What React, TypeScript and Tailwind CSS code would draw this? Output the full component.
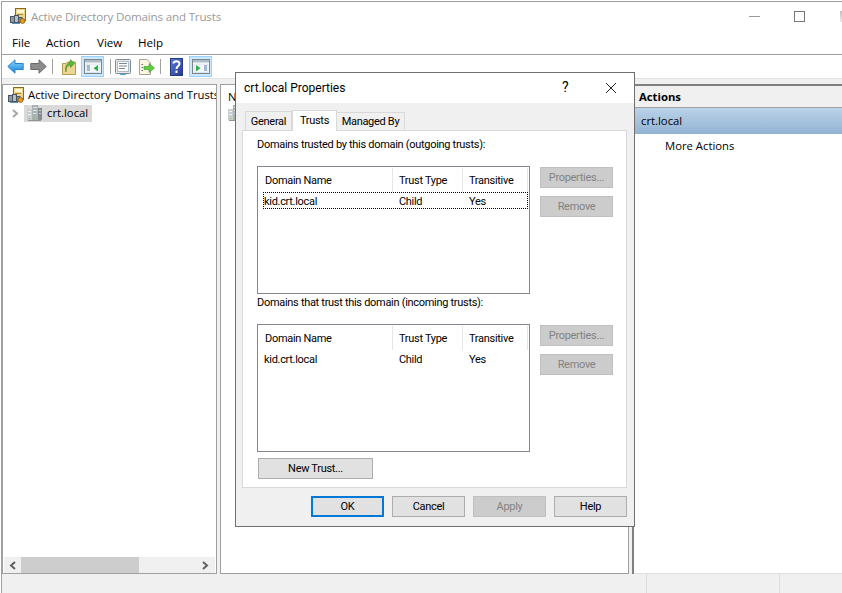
import React from "react";

function ADIcon() {
  return (
    <svg width="17" height="17" viewBox="0 0 17 17" className="shrink-0">
      <rect x="5.5" y="0.5" width="10" height="12" fill="#ecd48a" stroke="#8a6a1f" />
      <rect x="7" y="2" width="7" height="3" fill="#fff6cf" />
      <rect x="7" y="6" width="6" height="1" fill="#b08a30" />
      <rect x="0.5" y="8.5" width="4" height="6" fill="#8f9aa6" stroke="#4a5560" />
      <rect x="4.5" y="7.5" width="4" height="7" fill="#b4bec8" stroke="#4a5560" />
      <rect x="8.5" y="9.5" width="3.5" height="5" fill="#7d8894" stroke="#4a5560" />
      <circle cx="12.5" cy="13" r="2.5" fill="#e59a1c" stroke="#8a5a10" strokeWidth="0.7" />
      <rect x="2" y="15" width="8" height="1" fill="#5c8fc0" />
    </svg>
  );
}

function ServerIcon() {
  return (
    <svg width="15" height="16" viewBox="0 0 15 16" className="shrink-0">
      <rect x="0" y="4" width="5" height="11" fill="#c9cfd0" />
      <rect x="5" y="0" width="6" height="15" fill="#a9b1b2" />
      <rect x="11" y="3" width="4" height="12" fill="#848e90" />
      <rect x="1" y="6" width="3" height="1" fill="#eef1f1" />
      <rect x="1" y="9" width="3" height="1" fill="#eef1f1" />
      <rect x="6" y="2" width="4" height="1" fill="#dfe4e4" />
      <rect x="6" y="5" width="4" height="1" fill="#dfe4e4" />
      <rect x="6" y="8" width="4" height="1" fill="#dfe4e4" />
      <rect x="12" y="5" width="2" height="1" fill="#c4caca" />
      <rect x="12" y="8" width="2" height="1" fill="#c4caca" />
      <rect x="2" y="13" width="1" height="1" fill="#6fbf4a" />
      <rect x="7" y="13" width="1" height="1" fill="#6fbf4a" />
      <rect x="1" y="15" width="13" height="1" fill="#8e9698" />
    </svg>
  );
}

function BackIcon() {
  return (
    <svg width="17" height="15" viewBox="0 0 17 15" className="shrink-0">
      <defs>
        <linearGradient id="blueArrow" x1="0" y1="0" x2="0" y2="1">
          <stop offset="0" stopColor="#8ad8fd" />
          <stop offset="1" stopColor="#1483d8" />
        </linearGradient>
      </defs>
      <path d="M8 0.8 L0.8 7.5 L8 14.2 V10.5 H16.2 V4.5 H8 Z" fill="url(#blueArrow)" stroke="#2a86cc" />
    </svg>
  );
}

function ForwardIcon() {
  return (
    <svg width="17" height="15" viewBox="0 0 17 15" className="shrink-0">
      <path d="M9 0.8 L16.2 7.5 L9 14.2 V10.5 H0.8 V4.5 H9 Z" fill="#8c8c8c" stroke="#6a6a6a" />
    </svg>
  );
}

function FolderUpIcon() {
  return (
    <svg width="14" height="16" viewBox="0 0 14 16" className="shrink-0">
      <path d="M0.5 4.5 H4 L5.5 3 H13.5 V15.5 H0.5 Z" fill="#efd593" stroke="#b89a4a" />
      <path d="M4 13 C4 8 6 6.5 8.5 6 V8.5 L12.5 4.2 L8.3 0.6 V3 C5 4 2.5 8 4 13 Z" fill="#5bb83a" stroke="#3a8a22" strokeWidth="0.6" />
    </svg>
  );
}

function PaneIcon({ side }: { side: "left" | "right" }) {
  const left = side === "left";
  return (
    <svg width="18" height="15" viewBox="0 0 18 15" className="shrink-0">
      <rect x="0.5" y="0.5" width="17" height="14" fill="#fff" stroke="#78868f" />
      <rect x="1" y="1" width="16" height="2.5" fill="#aebcc8" />
      <rect x="2" y="5" width="14" height="8.5" fill="#f4f7fa" stroke="#c0cad2" strokeWidth="0.5" />
      {left ? (
        <>
          <rect x="3" y="6.5" width="3" height="1" fill="#5a7ea0" />
          <rect x="3" y="8.5" width="3" height="1" fill="#5a7ea0" />
          <rect x="3" y="10.5" width="3" height="1" fill="#5a7ea0" />
          <path d="M14 6 V12.5 L9.5 9.2 Z" fill="#2cae4a" />
        </>
      ) : (
        <>
          <path d="M4 6 V12.5 L8.5 9.2 Z" fill="#2cae4a" />
          <rect x="12" y="6.5" width="3" height="1" fill="#5a7ea0" />
          <rect x="12" y="8.5" width="3" height="1" fill="#5a7ea0" />
          <rect x="12" y="10.5" width="3" height="1" fill="#5a7ea0" />
        </>
      )}
    </svg>
  );
}

function PropsIcon() {
  return (
    <svg width="16" height="16" viewBox="0 0 16 16" className="shrink-0">
      <rect x="0.5" y="0.5" width="15" height="14" rx="1" fill="#e8eaec" stroke="#7c8892" />
      <rect x="2.5" y="2.5" width="11" height="10" fill="#fff" stroke="#b0bac2" />
      <rect x="4" y="4" width="8" height="1" fill="#7a8690" />
      <rect x="4" y="6.5" width="8" height="1" fill="#7a8690" />
      <rect x="4" y="9" width="6" height="1" fill="#7a8690" />
      <rect x="5" y="15" width="6" height="1" fill="#45b0e0" />
    </svg>
  );
}

function ExportIcon() {
  return (
    <svg width="17" height="16" viewBox="0 0 17 16" className="shrink-0">
      <path d="M1.5 0.5 H9 L12.5 4 V15.5 H1.5 Z" fill="#fbf6e4" stroke="#a8a492" />
      <rect x="3.5" y="5" width="1.5" height="1" fill="#666" />
      <rect x="3.5" y="8" width="1.5" height="1" fill="#666" />
      <rect x="3.5" y="11" width="1.5" height="1" fill="#666" />
      <path d="M6 7.5 H11 V4.5 L16.5 9 L11 13.5 V10.5 H6 Z" fill="#5fce3e" stroke="#3c9a28" strokeWidth="0.6" />
    </svg>
  );
}

function HelpIcon() {
  return (
    <svg width="13" height="18" viewBox="0 0 13 18" className="shrink-0">
      <defs>
        <linearGradient id="helpBlue" x1="0" y1="0" x2="1" y2="1">
          <stop offset="0" stopColor="#5a7fd8" />
          <stop offset="1" stopColor="#23388f" />
        </linearGradient>
      </defs>
      <rect x="0.5" y="0.5" width="12" height="17" fill="url(#helpBlue)" stroke="#263a86" />
      <path d="M3.5 5.5 C3.5 2.5 9.5 2.5 9.5 5.8 C9.5 8 6.5 8 6.5 11" fill="none" stroke="#fff" strokeWidth="2" />
      <rect x="5.5" y="12.5" width="2" height="2.5" fill="#fff" />
    </svg>
  );
}

function Sep() {
  return <div className="w-px h-[15px] bg-[#a0a0a0] shrink-0" />;
}

function Chevron({ left, color = "#606060" }: { left?: boolean; color?: string }) {
  return (
    <svg width="8" height="9" viewBox="0 0 8 9" className="shrink-0">
      <path d={left ? "M6 1 L2 4.5 L6 8" : "M2 1 L6 4.5 L2 8"} fill="none" stroke={color} strokeWidth="2" />
    </svg>
  );
}

function DisabledBtn({ label, className = "" }: { label: string; className?: string }) {
  return (
    <div className={`w-[73px] h-[21px] flex items-center justify-center pt-[2px] bg-[#cccccc] border border-[#bfbfbf] text-[#838383] ${className}`}>
      {label}
    </div>
  );
}

function TrustList({ focused }: { focused?: boolean }) {
  return (
    <div className="w-[273px] h-[128px] border border-[#828790] bg-white pt-px shrink-0">
      <div className="flex h-[24px]">
        <div className="w-[135px] pl-[7px] pt-[2px] flex items-center border-r border-[#e5e5e5]">Domain Name</div>
        <div className="w-[70px] pl-[6px] pt-[2px] flex items-center border-r border-[#e5e5e5]">Trust Type</div>
        <div className="w-[65px] pl-[6px] pt-[2px] flex items-center border-r border-[#e5e5e5]">Transitive</div>
      </div>
      <div
        className={`flex h-[17px] ml-[5px] w-[265px] items-center pt-[3px] border border-dotted ${
          focused ? "border-black" : "border-transparent"
        }`}
      >
        <div className="w-[135px]">kid.crt.local</div>
        <div className="w-[70px]">Child</div>
        <div>Yes</div>
      </div>
    </div>
  );
}

function Dialog() {
  return (
    <div className="absolute left-[235px] top-[72px] w-[400px] h-[455px] border border-[#6f6f6f] bg-[#f0f0f0] flex flex-col font-['Roboto',sans-serif] text-[11px] tracking-[-0.3px] text-black">
      <div className="h-[30px] bg-white flex items-center shrink-0 relative">
        <span className="ml-[8px] text-[12px] tracking-normal -mt-[1px]">crt.local Properties</span>
        <span className="absolute left-[326px] top-[4px] text-[14px]">?</span>
        <svg width="12" height="12" viewBox="0 0 12 12" className="absolute left-[369px] top-[9px]">
          <path d="M1 1 L11 11 M11 1 L1 11" stroke="#222" strokeWidth="1" />
        </svg>
      </div>
      <div className="flex items-end h-[27px] ml-[9px] shrink-0">
        <div className="w-[47px] h-[19px] border border-b-0 border-[#d9d9d9] bg-[#f0f0f0] flex items-center justify-center pt-[2px]">General</div>
        <div className="w-[45px] h-[21px] border border-b-0 border-[#d9d9d9] bg-white flex items-center justify-center relative z-10 -mb-px">Trusts</div>
        <div className="w-[68px] h-[18px] border border-b-0 border-l-0 border-[#d9d9d9] bg-[#f0f0f0] flex items-center justify-center pt-[2px]">Managed By</div>
      </div>
      <div className="ml-[6px] w-[385px] h-[358px] border border-[#d9d9d9] bg-white pl-[14px] shrink-0 flex flex-col">
        <div className="h-[35px] pt-[6px] shrink-0">Domains trusted by this domain (outgoing trusts):</div>
        <div className="flex">
          <TrustList focused />
          <div className="ml-[10px] pt-px flex flex-col gap-[8px]">
            <DisabledBtn label="Properties..." />
            <DisabledBtn label="Remove" />
          </div>
        </div>
        <div className="h-[30px] pt-[1px] shrink-0">Domains that trust this domain (incoming trusts):</div>
        <div className="flex">
          <TrustList />
          <div className="ml-[10px] pt-px flex flex-col gap-[8px]">
            <DisabledBtn label="Properties..." />
            <DisabledBtn label="Remove" />
          </div>
        </div>
        <div className="ml-px mt-[6px] w-[115px] h-[21px] pt-[2px] bg-[#e1e1e1] border border-[#adadad] flex items-center justify-center">New Trust...</div>
      </div>
      <div className="flex justify-end gap-[8px] mt-[8px] mr-[7px]">
        <div className="w-[73px] h-[21px] pt-[2px] bg-[#e1e1e1] border-2 border-[#0078d7] flex items-center justify-center">OK</div>
        <div className="w-[73px] h-[21px] pt-[2px] bg-[#e1e1e1] border border-[#adadad] flex items-center justify-center">Cancel</div>
        <DisabledBtn label="Apply" />
        <div className="w-[73px] h-[21px] pt-[2px] bg-[#e1e1e1] border border-[#adadad] flex items-center justify-center">Help</div>
      </div>
    </div>
  );
}

export default function App() {
  return (
    <div className="relative w-[842px] h-[593px] overflow-hidden bg-white font-['Open_Sans',sans-serif] text-[11.3px] text-black pl-px pt-px">
      <div className="h-[592px] border-l border-t border-[#a0a0a0] flex flex-col">
        {/* title bar */}
        <div className="h-[29px] flex items-center shrink-0 relative">
          <div className="ml-[8px]"><ADIcon /></div>
          <span className="ml-[4px] text-[#9a9a9a] text-[11.6px] tracking-[-0.18px]">Active Directory Domains and Trusts</span>
          <div className="absolute left-[747px] top-[14px] w-[11px] h-px bg-[#9a9a9a]" />
          <div className="absolute left-[792px] top-[9px] w-[11px] h-[11px] border border-[#777]" />
          <div className="absolute left-[838px] top-[9px] w-[2px] h-[11px] bg-[linear-gradient(135deg,#bbb,#eee)]" />
        </div>
        {/* menu */}
        <div className="h-[24px] flex items-center shrink-0 border-b border-[#a0a0a0] pl-[10px] relative text-[11.6px]">
          <span className="w-[34px]">File</span>
          <span className="w-[51px]">Action</span>
          <span className="w-[41px]">View</span>
          <span>Help</span>
        </div>
        {/* toolbar */}
        <div className="h-[23px] flex items-center shrink-0 pl-[5px]">
          <BackIcon />
          <div className="w-[6px]" />
          <ForwardIcon />
          <div className="w-[5px]" />
          <Sep />
          <div className="w-[9px]" />
          <FolderUpIcon />
          <div className="w-[5px]" />
          <div className="w-[23px] h-[21px] bg-[#cce8ff] border border-[#99d1ff] flex items-center justify-center"><PaneIcon side="left" /></div>
          <div className="w-[6px]" />
          <Sep />
          <div className="w-[4px]" />
          <PropsIcon />
          <div className="w-[7px]" />
          <ExportIcon />
          <div className="w-[5px]" />
          <Sep />
          <div className="w-[9px]" />
          <HelpIcon />
          <div className="w-[6px]" />
          <div className="w-[23px] h-[21px] bg-[#cce8ff] border border-[#99d1ff] flex items-center justify-center"><PaneIcon side="right" /></div>
        </div>
        {/* band */}
        <div className="h-[6px] bg-[#f0f0f0] border-t border-[#e3e3e3] shrink-0" />
        {/* panes */}
        <div className="h-[490px] bg-[#f0f0f0] flex shrink-0">
          <div className="w-[215px] h-full border border-[#a0a0a0] bg-white flex flex-col overflow-hidden">
            <div className="h-[19px] flex items-center pl-[5px] pt-[2px] shrink-0 whitespace-nowrap">
              <ADIcon />
              <span className="ml-[3px]">Active Directory Domains and Trusts</span>
            </div>
            <div className="h-[18px] flex items-center pl-[8px] shrink-0">
              <Chevron color="#a6a6a6" />
              <div className="ml-[5px] w-[68px] h-[17px] bg-[#d9d9d9] flex items-center pl-[3px]">
                <ServerIcon />
                <span className="ml-[5px]">crt.local</span>
              </div>
            </div>
            <div className="flex-1" />
            <div className="h-[16px] bg-[#f0f0f0] flex items-center shrink-0 mx-px">
              <div className="w-[17px] flex justify-center"><Chevron left color="#606060" /></div>
              <div className="w-[118px] h-full bg-[#cdcdcd]" />
              <div className="flex-1" />
              <div className="w-[19px] flex justify-center pr-[2px]"><Chevron color="#606060" /></div>
            </div>
          </div>
          <div className="w-[3px]" />
          <div className="w-[409px] h-full border border-[#a0a0a0] bg-white pl-[7px] pt-[4px] overflow-hidden">
            <div className="h-[16px]">N</div>
            <ServerIcon />
          </div>
          <div className="w-[3px]" />
          <div className="w-[2px] h-full bg-[#808080]" />
          <div className="flex-1 h-full border-t-2 border-t-[#808080] border-b border-b-[#e0e0e0] bg-white flex flex-col">
            <div className="h-[22px] bg-[#f0f0f0] border-b border-[#a0a0a0] flex items-center pl-[5px] font-bold pt-[2px] shrink-0">Actions</div>
            <div className="h-[26px] bg-[linear-gradient(#bad2e9,#93b3d3)] flex items-center pl-[7px] shrink-0">crt.local</div>
            <div className="h-[24px] flex items-center pl-[31px] shrink-0">More Actions</div>
          </div>
        </div>
        {/* status */}
        <div className="flex-1 bg-[#f0f0f0] flex">
          <div className="w-[645px] border-r border-[#dcdcdc]" />
          <div className="w-[133px] border-r border-[#dcdcdc]" />
        </div>
      </div>
      <Dialog />
    </div>
  );
}
